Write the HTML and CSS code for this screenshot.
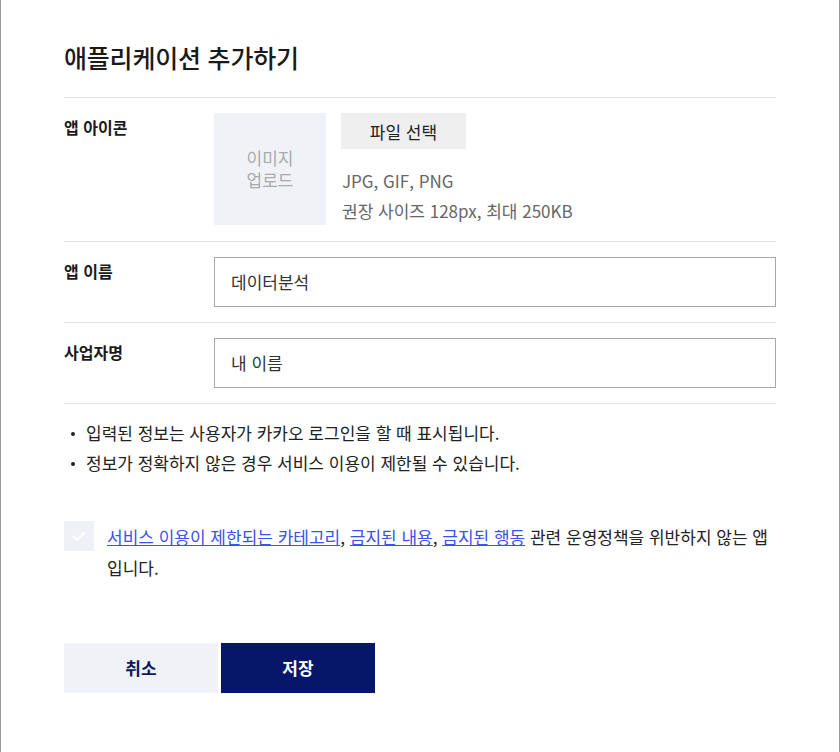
FILE: index.html
```html
<!DOCTYPE html>
<html lang="ko">
<head>
<meta charset="utf-8">
<title>애플리케이션 추가하기</title>
<link rel="stylesheet" href="styles.css">
</head>
<body>
<div class="modal">
  <h1 class="title">애플리케이션 추가하기</h1>
  <div class="row">
    <div class="label">앱 아이콘</div>
    <div class="field icon-field">
      <div class="upload-box">이미지<br>업로드</div>
      <div class="upload-info">
        <button class="file-btn" type="button">파일 선택</button>
        <p class="hint">JPG, GIF, PNG<br>권장 사이즈 128px, 최대 250KB</p>
      </div>
    </div>
  </div>
  <div class="row">
    <div class="label">앱 이름</div>
    <div class="field"><div class="input">데이터분석</div></div>
  </div>
  <div class="row">
    <div class="label">사업자명</div>
    <div class="field"><div class="input">내 이름</div></div>
  </div>
  <ul class="notes">
    <li>입력된 정보는 사용자가 카카오 로그인을 할 때 표시됩니다.</li>
    <li>정보가 정확하지 않은 경우 서비스 이용이 제한될 수 있습니다.</li>
  </ul>
  <div class="agree">
    <span class="check">
      <svg width="16" height="16" viewBox="0 0 16 16"><path d="M2.5 8.5 L6.2 12 L13.5 4.5" fill="none" stroke="#fff" stroke-width="2" stroke-linecap="round" stroke-linejoin="round"/></svg>
    </span>
    <p class="agree-text"><a href="#">서비스 이용이 제한되는 카테고리</a>, <a href="#">금지된 내용</a>, <a href="#">금지된 행동</a> 관련 운영정책을 위반하지 않는 앱입니다.</p>
  </div>
  <div class="actions">
    <button class="btn cancel" type="button">취소</button>
    <button class="btn save" type="button">저장</button>
  </div>
</div>
</body>
</html>
```
FILE: styles.css
```css
* { box-sizing: border-box; }
html, body { margin: 0; padding: 0; }
body {
  background: #9a9a9a;
  font-family: "Noto Sans CJK KR", "Noto Sans", sans-serif;
  color: #222;
  height: 752px;
  overflow: hidden;
}
.modal {
  margin: 0 1px;
  background: #fff;
  height: 752px;
  padding: 39px 63px 0 63px;
}
.title {
  margin: 0;
  font-size: 25px;
  letter-spacing: -0.2px;
  font-weight: 500;
  line-height: 36px;
  padding-bottom: 22px;
  border-bottom: 1px solid #e4e4e4;
  color: #1a1a1a;
}
.row {
  display: flex;
  padding: 15px 0;
  border-bottom: 1px solid #e4e4e4;
}
.label {
  width: 150px;
  flex: none;
  font-size: 16px;
  font-weight: 700;
  line-height: 28px;
  color: #1a1a1a;
}
.field { flex: 1; }
.icon-field { display: flex; gap: 15px; }
.upload-box {
  width: 112px;
  height: 112px;
  background: #f1f2f7;
  color: #aaaaaa;
  font-size: 17px;
  line-height: 22px;
  text-align: center;
  display: flex;
  align-items: center;
  justify-content: center;
}
.upload-info { display: flex; flex-direction: column; align-items: flex-start; }
.file-btn {
  width: 125px;
  height: 36px;
  border: 0;
  background: #efefef;
  font-family: inherit;
  font-size: 17px;
  color: #222;
  padding: 0;
}
.hint {
  margin: 17px 0 0 1px;
  font-size: 17px;
  line-height: 30px;
  color: #666;
}
.input {
  height: 50px;
  border: 1px solid #a9a9a9;
  padding: 0 16px;
  font-size: 17px;
  line-height: 48px;
  color: #333;
}
.notes {
  list-style: none;
  margin: 0;
  padding: 14px 0 0 0;
}
.notes li {
  position: relative;
  padding-left: 22px;
  font-size: 17px;
  line-height: 30px;
  color: #222;
}
.notes li::before {
  content: "";
  position: absolute;
  left: 7px;
  top: 14px;
  width: 4px;
  height: 4px;
  border-radius: 50%;
  background: #222;
}
.agree {
  display: flex;
  gap: 13px;
  margin-top: 43px;
}
.check {
  flex: none;
  width: 30px;
  height: 30px;
  background: #f0f1f6;
  display: flex;
  align-items: center;
  justify-content: center;
}
.agree-text {
  margin: -0.5px 0 0 0;
  font-size: 17px;
  line-height: 31px;
  color: #222;
}
.agree-text a { color: #3b50f0; text-decoration: underline; }
.actions {
  display: flex;
  gap: 3px;
  margin-top: 60px;
}
.btn {
  width: 154px;
  height: 50px;
  border: 0;
  font-family: inherit;
  font-size: 17px;
  font-weight: 700;
  padding: 0;
}
.cancel { background: #f1f2f7; color: #0b1a5c; }
.save { background: #06176a; color: #fff; }
```
